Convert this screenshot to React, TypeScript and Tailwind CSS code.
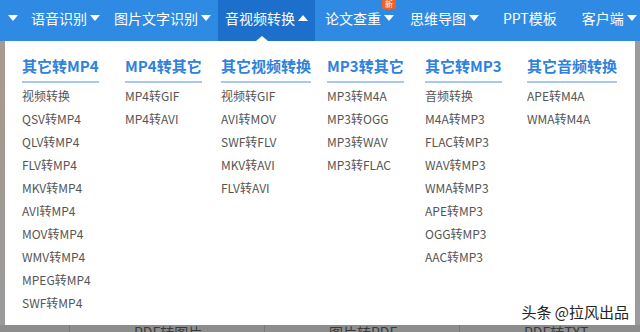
import React from "react";

type Column = { title: string; width: string; items: string[] };

const columns: Column[] = [
  {
    title: "其它转MP4",
    width: "w-[103px]",
    items: ["视频转换", "QSV转MP4", "QLV转MP4", "FLV转MP4", "MKV转MP4", "AVI转MP4", "MOV转MP4", "WMV转MP4", "MPEG转MP4", "SWF转MP4"],
  },
  { title: "MP4转其它", width: "w-[96px]", items: ["MP4转GIF", "MP4转AVI"] },
  {
    title: "其它视频转换",
    width: "w-[106px]",
    items: ["视频转GIF", "AVI转MOV", "SWF转FLV", "MKV转AVI", "FLV转AVI"],
  },
  { title: "MP3转其它", width: "w-[98px]", items: ["MP3转M4A", "MP3转OGG", "MP3转WAV", "MP3转FLAC"] },
  {
    title: "其它转MP3",
    width: "w-[102px]",
    items: ["音频转换", "M4A转MP3", "FLAC转MP3", "WAV转MP3", "WMA转MP3", "APE转MP3", "OGG转MP3", "AAC转MP3"],
  },
  { title: "其它音频转换", width: "w-[100px]", items: ["APE转M4A", "WMA转M4A"] },
];

function Caret({ up }: { up?: boolean }) {
  return (
    <svg width="10" height="6" viewBox="0 0 10 6" className="ml-[3px] shrink-0">
      {up ? <path d="M0 6 L5 0 L10 6 Z" fill="#fff" /> : <path d="M0 0 L10 0 L5 6 Z" fill="#fff" />}
    </svg>
  );
}

function NavItem({ label, caret = true, px = "px-[7px]" }: { label: string; caret?: boolean; px?: string }) {
  return (
    <div className={`flex h-[36px] shrink-0 items-center whitespace-nowrap ${px}`}>
      <span>{label}</span>
      {caret && <Caret />}
    </div>
  );
}

export default function App() {
  return (
    <div
      className="relative flex h-[332px] w-[640px] flex-col overflow-hidden bg-[#8d8d8d]"
      style={{ fontFamily: '"Noto Sans CJK SC", "Noto Sans", sans-serif' }}
    >
      {/* top navigation */}
      <div className="flex h-[41px] shrink-0 items-start overflow-hidden bg-[#2f8ae4] text-[14px] leading-[20px] text-white">
        <div className="flex h-[36px] shrink-0 items-center pl-[5px] pr-[6px]">
          <Caret />
        </div>
        <NavItem label="语音识别" />
        <NavItem label="图片文字识别" />
        <div className="relative flex h-[41px] shrink-0 items-start whitespace-nowrap bg-[#1c70cc]">
          <div className="flex h-[36px] items-center px-[7px]">
            <span>音视频转换</span>
            <Caret up />
          </div>
          <div className="absolute bottom-0 left-[38px] h-0 w-0 border-x-[6px] border-b-[5px] border-x-transparent border-b-white" />
        </div>
        <div className="relative shrink-0">
          <NavItem label="论文查重" px="pl-[10px] pr-[8px]" />
          <div className="absolute left-[67px] top-[-2px] flex h-[11px] w-[14px] items-center justify-center rounded-[2px] bg-[#f0602a] text-[8px] leading-none text-white">
            新
          </div>
          <div className="absolute left-[72px] top-[9px] h-0 w-0 border-x-[2px] border-t-[2px] border-x-transparent border-t-[#f0602a]" />
        </div>
        <NavItem label="思维导图" px="px-[8px]" />
        <NavItem label="PPT模板" caret={false} px="pl-[16px] pr-[17px]" />
        <NavItem label="客户端" px="px-[8px]" />
      </div>

      {/* dropdown + dimmed page */}
      <div className="flex h-[284px] shrink-0">
        <div className="w-[5px] bg-gradient-to-b from-[#a89a8e] to-[#9a9a9a]" />
        <div className="relative flex w-[630px] bg-white pl-[17px] pt-[15px]">
          {columns.map((col) => (
            <div key={col.title} className={`${col.width} shrink-0`}>
              <div className="w-fit whitespace-nowrap border-b-2 border-[#a9c8f0] pb-[5px] text-[15px] font-bold leading-[20px] text-[#2e82dc]">
                {col.title}
              </div>
              <ul className="pt-[1px]">
                {col.items.map((item) => (
                  <li key={item} className="whitespace-nowrap text-[12px] leading-[23px] text-[#555]">
                    {item}
                  </li>
                ))}
              </ul>
            </div>
          ))}
          <div className="absolute bottom-[4px] right-[6px] text-[15px] leading-[18px] text-[#222]">
            头条 @拉风出品
          </div>
        </div>
        <div className="w-[5px] bg-[#9b9b9b]" />
      </div>

      {/* page content peeking below */}
      <div className="relative flex h-[7px] overflow-hidden text-[14px] leading-[14px] text-[#3a3a3a]">
        <div className="w-[70px] border-r border-[#777]" />
        <div className="w-[195px] border-r border-[#777] pl-[64px]">PDF转图片</div>
        <div className="w-[195px] border-r border-[#777] pl-[64px]">图片转PDF</div>
        <div className="pl-[64px]">PDF转TXT</div>
      </div>
    </div>
  );
}
